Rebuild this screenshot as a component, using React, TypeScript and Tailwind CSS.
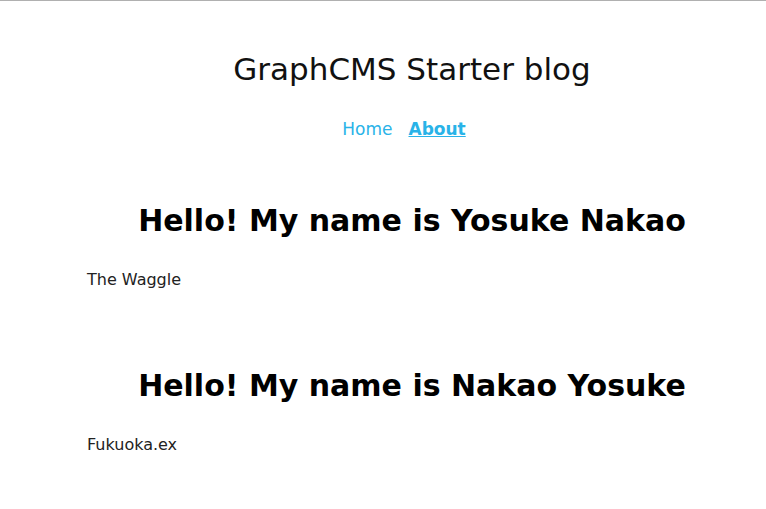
import React from 'react';

const posts = [
  { title: 'Hello! My name is Yosuke Nakao', body: 'The Waggle' },
  { title: 'Hello! My name is Nakao Yosuke', body: 'Fukuoka.ex' },
];

export default function App() {
  return (
    <div className="min-h-[509px] w-[766px] bg-white border-t border-[#b0b0b0] font-['DejaVu_Sans',sans-serif] text-[#111]">
      <header className="pl-[87px] pr-[29px] pt-[46px]">
        <h1 className="text-center text-[31px] leading-[44px] font-normal">GraphCMS Starter blog</h1>
        <nav className="mt-[26px] flex justify-center gap-[16px] pr-[16px] text-[17px] leading-[24px] text-[#29b3e8]">
          <a href="#">Home</a>
          <a href="#" className="font-bold underline">About</a>
        </nav>
      </header>
      <main className="pl-[87px] pr-[29px] pt-[58px]">
        {posts.map((p, i) => (
          <section key={i} className="mb-[73px]">
            <h2 className="text-center text-[30px] leading-[44px] font-bold text-black">{p.title}</h2>
            <p className="mt-[26px] text-[16px] leading-[22px] text-[#222]">{p.body}</p>
          </section>
        ))}
      </main>
    </div>
  );
}
